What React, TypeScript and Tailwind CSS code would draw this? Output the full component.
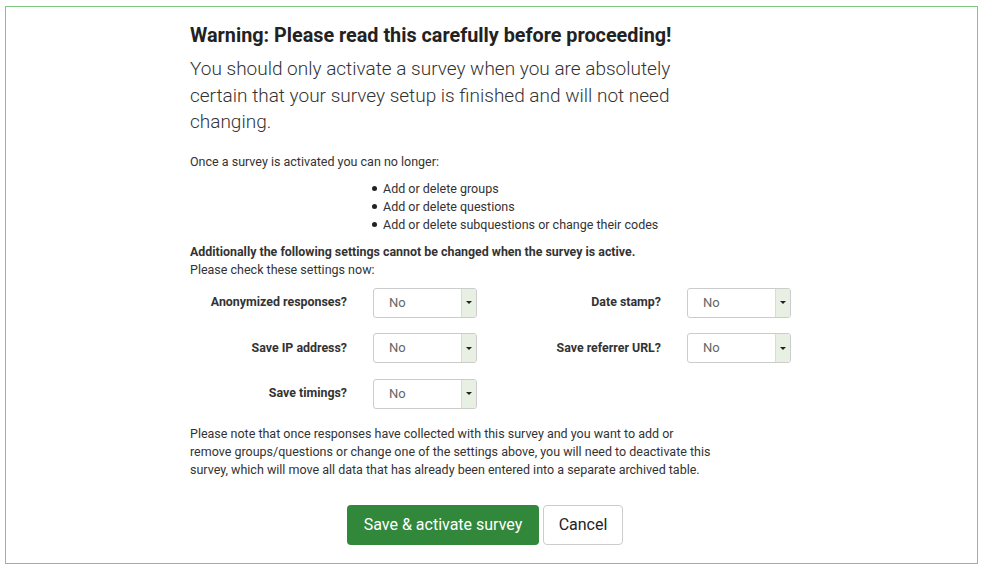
const font = { fontFamily: 'Roboto, "Noto Sans", sans-serif' };

const leftSettings = ['Anonymized responses?', 'Save IP address?', 'Save timings?'];
const rightSettings = ['Date stamp?', 'Save referrer URL?'];
const lockedItems = ['Add or delete groups', 'Add or delete questions', 'Add or delete subquestions or change their codes'];

function SelectNo() {
  return (
    <div className="flex h-[30px] w-[104px] overflow-hidden rounded-[3px] border border-[#cccccc] bg-white">
      <div className="flex flex-1 items-center pl-[15px] text-[13px] text-[#666666]">No</div>
      <div className="flex w-[15px] items-center justify-center border-l border-[#d8ddd4] bg-[#e8efe3]">
        <div className="h-0 w-0 border-x-[3px] border-t-[3px] border-x-transparent border-t-[#222222]" />
      </div>
    </div>
  );
}

function Label({ text }: { text: string }) {
  return <div className="flex h-[30px] items-center justify-end text-[12.4px] font-bold text-[#333333]">{text}</div>;
}

export default function App() {
  const rows = [0, 1, 2];
  return (
    <div className="h-[568px] w-[982px] bg-white pl-[5px] pt-[6px]" style={font}>
      <div className="h-[558px] w-[973px] border border-[#80c783] pl-[184px] pt-[18px] text-[#333333]">
        <h1 className="text-[19.8px] font-bold leading-[22px] text-[#222222]">
          Warning: Please read this carefully before proceeding!
        </h1>
        <p className="mt-[9px] max-w-[530px] text-[19px] font-light leading-[26.5px] text-[#333333]">
          You should only activate a survey when you are absolutely certain that your survey setup is finished and will
          not need changing.
        </p>
        <p className="mt-[17px] text-[12.5px] leading-[18px]">Once a survey is activated you can no longer:</p>
        <ul className="mt-[9px] pl-[182px] text-[12.5px] leading-[18px]">
          {lockedItems.map((item) => (
            <li key={item} className="flex items-center gap-[6px]">
              <span className="h-[5px] w-[5px] rounded-full bg-[#222222]" />
              {item}
            </li>
          ))}
        </ul>
        <p className="mt-[9px] text-[12.4px] font-bold leading-[18px]">
          Additionally the following settings cannot be changed when the survey is active.
        </p>
        <p className="text-[12.5px] leading-[18px]">Please check these settings now:</p>
        <div className="mt-[9px] grid grid-cols-[157px_104px_158px_104px] gap-x-[26px] gap-y-[15.5px]">
          {rows.map((i) => (
            <div key={i} className="contents">
              <Label text={leftSettings[i]} />
              <SelectNo />
              {rightSettings[i] ? (
                <>
                  <Label text={rightSettings[i]} />
                  <SelectNo />
                </>
              ) : (
                <>
                  <div />
                  <div />
                </>
              )}
            </div>
          ))}
        </div>
        <p className="mt-[16px] max-w-[522px] text-[12.5px] leading-[18px]">
          Please note that once responses have collected with this survey and you want to add or remove groups/questions
          or change one of the settings above, you will need to deactivate this survey, which will move all data that has
          already been entered into a separate archived table.
        </p>
        <div className="mt-[26px] flex gap-[4px] pl-[157px]">
          <button className="h-[40px] w-[192px] rounded-[4px] bg-[#31873a] text-[16px] text-white">
            Save &amp; activate survey
          </button>
          <button className="h-[40px] w-[80px] rounded-[4px] border border-[#cccccc] bg-white text-[16px] text-[#222222]">
            Cancel
          </button>
        </div>
      </div>
    </div>
  );
}
